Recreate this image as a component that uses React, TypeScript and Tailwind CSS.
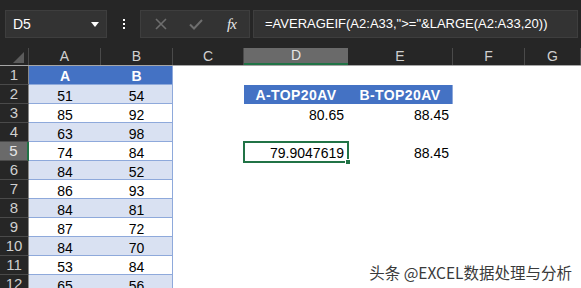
import React from "react";

const colA = [51, 85, 63, 74, 84, 86, 84, 87, 84, 53, 65];
const colB = [54, 92, 98, 84, 52, 93, 81, 72, 70, 84, 56];

const widths = {
  hdr: "w-[29px]",
  A: "w-[72px]",
  B: "w-[72px]",
  C: "w-[71px]",
  D: "w-[104px]",
  E: "w-[105px]",
  F: "w-[72px]",
  G: "flex-1",
};

const letters: { key: keyof typeof widths; label: string }[] = [
  { key: "A", label: "A" },
  { key: "B", label: "B" },
  { key: "C", label: "C" },
  { key: "D", label: "D" },
  { key: "E", label: "E" },
  { key: "F", label: "F" },
  { key: "G", label: "G" },
];

const TopBar: React.FC = () => (
  <div className="h-[48px] bg-[#262626] flex items-start pt-[10px] pl-[5px] gap-[3px]">
    {/* name box */}
    <div className="w-[102px] h-[28px] bg-[#333333] border border-[#3e3e3e] flex items-center pl-[7px] pr-[7px] text-white text-[14px]">
      <span className="flex-1">D5</span>
      <svg width="8" height="5" viewBox="0 0 8 5">
        <path d="M0 0 L8 0 L4 5 Z" fill="#ffffff" />
      </svg>
    </div>
    <div className="w-[27px] h-[28px] flex flex-col items-center justify-center gap-[2px]">
      <span className="w-[2px] h-[2px] bg-white" />
      <span className="w-[2px] h-[2px] bg-white" />
      <span className="w-[2px] h-[2px] bg-white" />
    </div>
    {/* formula buttons */}
    <div className="w-[110px] h-[28px] bg-[#333333] border border-[#3e3e3e] flex items-center pl-[14px] gap-[22px]">
      <svg width="12" height="12" viewBox="0 0 12 12">
        <path d="M1 1 L11 11 M11 1 L1 11" stroke="#6e6e6e" strokeWidth="1.6" />
      </svg>
      <svg width="14" height="11" viewBox="0 0 14 11">
        <path d="M1 5.5 L5 9.5 L13 1" stroke="#6e6e6e" strokeWidth="2" fill="none" />
      </svg>
      <span className="text-[#e8e8e8] italic font-['Liberation_Serif'] text-[15px] leading-none tracking-[-1px] ml-[2px]">fx</span>
    </div>
    {/* formula box */}
    <div className="flex-1 h-[28px] bg-[#333333] border border-[#3e3e3e] mr-[3px] flex items-center pl-[11px] text-white text-[13px] whitespace-nowrap overflow-hidden">
      =AVERAGEIF(A2:A33,"&gt;="&amp;LARGE(A2:A33,20))
    </div>
  </div>
);

const ColumnHeaders: React.FC = () => (
  <div className="h-[18px] flex bg-[#262626] border-b border-[#a6a6a6]">
    <div className={`${widths.hdr} h-full border-r border-[#4a4a4a] flex items-end justify-end pr-[4px] pb-[2px]`}>
      <svg width="11" height="11" viewBox="0 0 11 11">
        <path d="M11 0 L11 11 L0 11 Z" fill="#5c5c5c" />
      </svg>
    </div>
    {letters.map((l) =>
      l.key === "D" ? (
        <div
          key={l.key}
          className={`${widths[l.key]} h-full bg-[#6a6a6a] border-b-2 border-[#217346] -mb-px flex items-center justify-center text-[14px] text-[#e6e6e6]`}
        >
          {l.label}
        </div>
      ) : (
        <div
          key={l.key}
          className={`${widths[l.key]} h-full border-r border-[#4a4a4a] flex items-center justify-center text-[14px] text-[#d0d0d0]`}
        >
          {l.label}
        </div>
      )
    )}
  </div>
);

const cellText = "text-[14px] text-black leading-none pt-[3px]";

const Row: React.FC<{ n: number }> = ({ n }) => {
  const isHead = n === 1;
  const stripe = n % 2 === 0 ? "bg-[#d9e1f2]" : "bg-white";
  const tableBg = isHead ? "bg-[#4472c4]" : stripe;
  const selected = n === 5;
  return (
    <div className="h-[19px] flex">
      <div
        className={`${widths.hdr} h-full flex items-center justify-center text-[15px] border-b border-[#4a4a4a] ${
          selected ? "bg-[#6a6a6a] text-[#e6e6e6] border-r-2 border-r-[#217346]" : "bg-[#262626] text-[#cfcfcf] border-r border-r-[#8a8a8a]"
        }`}
      >
        {n}
      </div>
      <div className={`${widths.A} h-full ${tableBg} border-b border-[#8ea9db] flex items-center justify-center ${isHead ? "text-white font-bold text-[14px] pt-[2px]" : cellText}`}>
        {isHead ? "A" : colA[n - 2]}
      </div>
      <div className={`${widths.B} h-full ${tableBg} border-b border-r border-[#8ea9db] flex items-center justify-center ${isHead ? "text-white font-bold text-[14px] pt-[2px]" : cellText}`}>
        {isHead ? "B" : colB[n - 2]}
      </div>
      <div className={`${widths.C} h-full`} />
      {n === 2 ? (
        <>
          <div className={`${widths.D} h-full bg-[#4472c4] flex items-center justify-center text-white font-bold text-[14px] tracking-[0.4px] pt-[2px]`}>
            A-TOP20AV
          </div>
          <div className={`${widths.E} h-full bg-[#4472c4] border-r border-[#8ea9db] flex items-center justify-center text-white font-bold text-[14px] tracking-[0.4px] pt-[2px]`}>
            B-TOP20AV
          </div>
        </>
      ) : n === 3 || n === 5 ? (
        <>
          <div className={`${widths.D} h-full flex items-center justify-end pr-[4px] ${cellText}`}>
            {n === 3 ? "80.65" : "79.9047619"}
          </div>
          <div className={`${widths.E} h-full flex items-center justify-end pr-[4px] ${cellText}`}>88.45</div>
        </>
      ) : (
        <>
          <div className={`${widths.D} h-full`} />
          <div className={`${widths.E} h-full`} />
        </>
      )}
      <div className={`${widths.F} h-full`} />
      <div className={`${widths.G} h-full`} />
    </div>
  );
};

export default function App() {
  const rows = Array.from({ length: 12 }, (_, i) => i + 1);
  return (
    <div className="relative w-[581px] h-[288px] overflow-hidden bg-white font-['Liberation_Sans',sans-serif]">
      <TopBar />
      <ColumnHeaders />
      <div className="flex flex-col">
        {rows.map((n) => (
          <Row key={n} n={n} />
        ))}
      </div>
      {/* active cell selection */}
      <div className="absolute left-[243px] top-[141px] w-[106px] h-[22px] border-2 border-[#217346]" />
      <div className="absolute left-[345px] top-[159px] w-[6px] h-[6px] bg-[#217346] border border-white" />
      {/* watermark */}
      <div className="absolute right-[9px] top-[265px] text-[15.5px] text-[#3a3a3a] font-['Noto_Sans_CJK_SC',sans-serif] [text-shadow:0_0_2px_#ffffff,0_0_2px_#ffffff] leading-none">
        头条 @EXCEL数据处理与分析
      </div>
    </div>
  );
}
